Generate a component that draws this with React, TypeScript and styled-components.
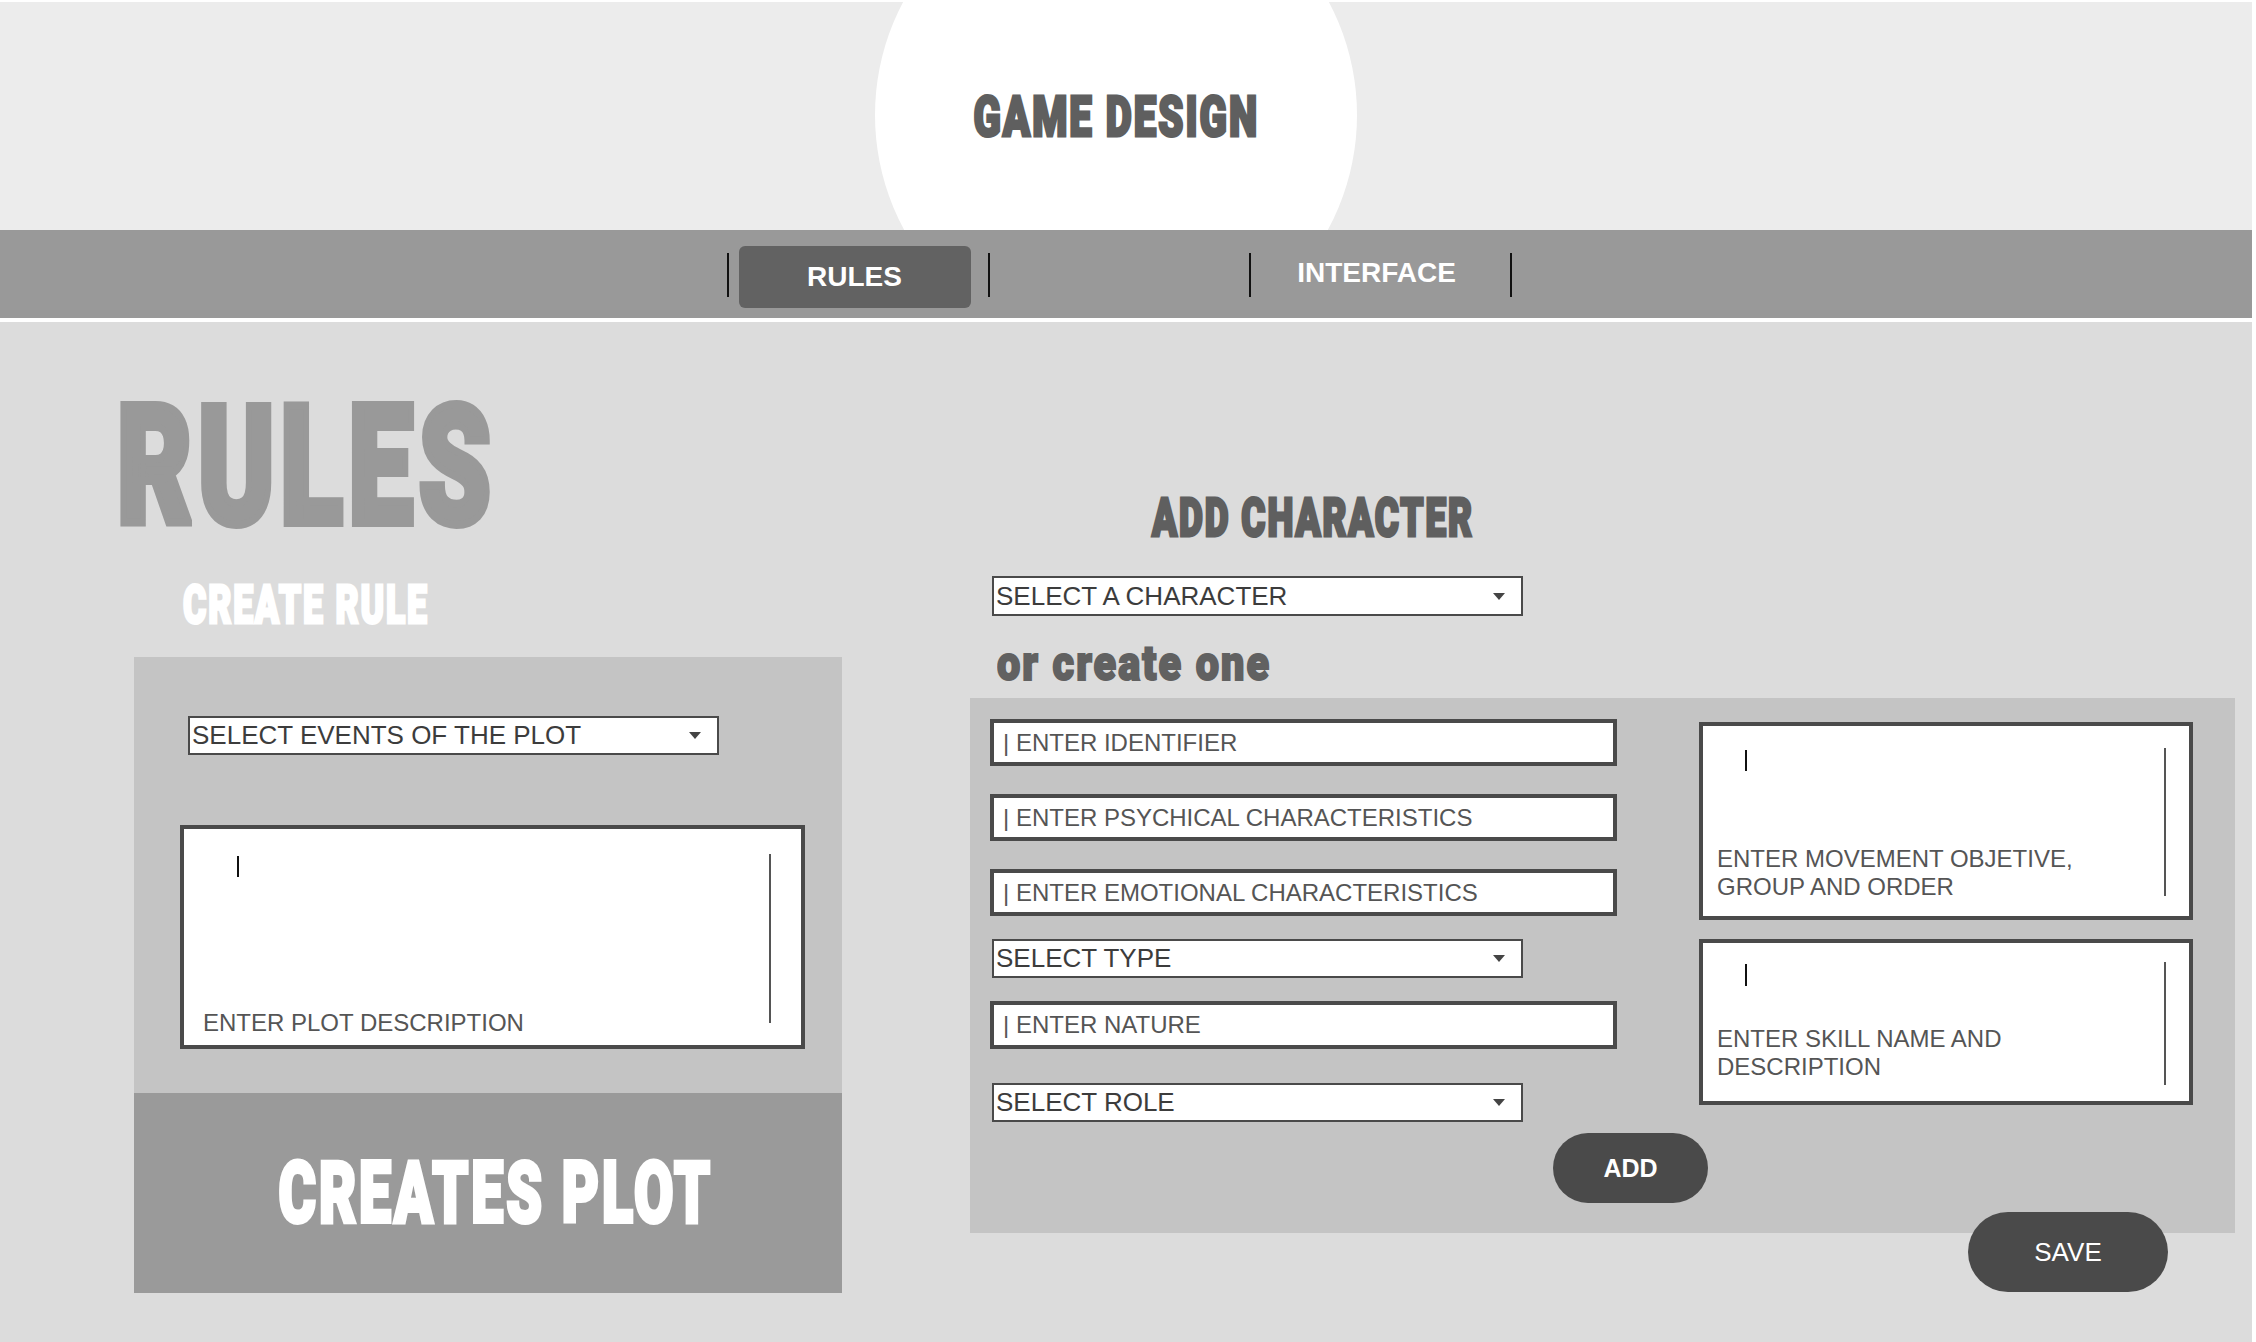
import React, { useLayoutEffect, useRef, useState } from 'react';
import styled, { createGlobalStyle } from 'styled-components';

const GlobalStyle = createGlobalStyle`
  html, body {
    margin: 0;
    padding: 0;
    background: #ffffff;
  }
  body {
    font-family: 'Liberation Sans', Arial, sans-serif;
  }
  * {
    box-sizing: border-box;
  }
`;

const Page = styled.div`
  width: 2252px;
  min-height: 1340px;
  margin-top: 2px;
  background: #dcdcdc;
  display: flex;
  flex-direction: column;
`;

const Header = styled.header`
  height: 228px;
  background: #ececec;
  display: flex;
  justify-content: center;
  padding-right: 20px;
  overflow: hidden;
`;

const Circle = styled.div`
  flex-shrink: 0;
  width: 482px;
  height: 482px;
  margin-top: -128px;
  border-radius: 50%;
  background: #ffffff;
  display: flex;
  align-items: center;
  justify-content: center;
  padding-top: 4px;
`;

const Nav = styled.nav`
  height: 92px;
  background: #999999;
  border-bottom: 4px solid #ffffff;
  display: flex;
  align-items: center;
  padding-left: 727px;
`;

const Divider = styled.span`
  width: 2px;
  height: 44px;
  background: #111111;
  margin-top: 1px;
`;

const TabSlot = styled.div`
  width: 259px;
  height: 100%;
  display: flex;
  align-items: center;
  justify-content: center;
`;

const Tab = styled.div<{ $active?: boolean }>`
  display: flex;
  align-items: center;
  justify-content: center;
  width: 232px;
  height: 62px;
  border-radius: 6px;
  background: ${(p) => (p.$active ? '#626262' : 'transparent')};
  margin: ${(p) => (p.$active ? '6px 8px 0 0' : '0 8px 2px 0')};
  color: #ffffff;
  font-size: 28px;
  font-weight: 700;
`;

const Main = styled.main`
  flex: 1;
  display: flex;
  align-items: flex-start;
`;

const LeftColumn = styled.section`
  width: 725px;
  margin-left: 117px;
  display: flex;
  flex-direction: column;
  align-items: flex-start;
`;

const RightColumn = styled.section`
  width: 1265px;
  margin-left: 128px;
  display: flex;
  flex-direction: column;
  align-items: flex-start;
`;

const Display = styled.span<{ $size: number; $color: string; $origin?: string }>`
  display: inline-block;
  font-family: Roboto, 'DejaVu Sans', sans-serif;
  font-weight: 900;
  font-size: ${(p) => p.$size}px;
  line-height: 1;
  letter-spacing: 0.05em;
  color: ${(p) => p.$color};
  -webkit-text-stroke: ${(p) => Math.round(p.$size * 0.05)}px ${(p) => p.$color};
  white-space: nowrap;
  transform-origin: ${(p) => p.$origin ?? 'left center'};
`;

const Block = styled.div<{ $top: number; $left?: number }>`
  margin-top: ${(p) => p.$top}px;
  margin-left: ${(p) => p.$left ?? 0}px;
  display: flex;
`;

type FitProps = {
  width: number;
  size: number;
  color: string;
  origin?: string;
  children: React.ReactNode;
};

// squeezes a heavy face horizontally to the condensed poster look
const FitText = ({ width, size, color, origin, children }: FitProps) => {
  const ref = useRef<HTMLSpanElement>(null);
  const [scale, setScale] = useState(1);

  useLayoutEffect(() => {
    const measure = () => {
      if (ref.current && ref.current.offsetWidth > 0) {
        setScale(width / ref.current.offsetWidth);
      }
    };
    measure();
    if (document.fonts) document.fonts.ready.then(measure);
  }, [width]);

  return (
    <Display
      ref={ref}
      $size={size}
      $color={color}
      $origin={origin}
      style={{ transform: `scaleX(${scale})` }}
    >
      {children}
    </Display>
  );
};

const Panel = styled.div<{ $width: number }>`
  width: ${(p) => p.$width}px;
  display: flex;
  flex-direction: column;
`;

const PanelBody = styled.div`
  height: 436px;
  background: #c4c4c4;
  padding: 59px 0 0 46px;
  display: flex;
  flex-direction: column;
  align-items: flex-start;
`;

const PanelFooter = styled.div`
  height: 200px;
  background: #9a9a9a;
  display: flex;
  align-items: center;
  justify-content: center;
  padding-left: 16px;
`;

const Select = styled.div<{ $top?: number; $left?: number; $h?: number }>`
  width: 531px;
  height: ${(p) => p.$h ?? 39}px;
  margin-top: ${(p) => p.$top ?? 0}px;
  margin-left: ${(p) => p.$left ?? 0}px;
  border: 2px solid #4a4a4a;
  background: #ffffff;
  display: flex;
  align-items: center;
  justify-content: space-between;
  padding: 0 16px 0 2px;
  font-size: 26px;
  color: #3c3c3c;
  white-space: nowrap;
`;

const Caret = styled.span`
  width: 0;
  height: 0;
  border-left: 6px solid transparent;
  border-right: 6px solid transparent;
  border-top: 7px solid #444444;
`;

const TextInput = styled.div<{ $top?: number; $h?: number }>`
  width: 627px;
  height: ${(p) => p.$h ?? 47}px;
  margin-top: ${(p) => p.$top ?? 0}px;
  border: 4px solid #4a4a4a;
  background: #ffffff;
  display: flex;
  align-items: center;
  padding-left: 9px;
  font-size: 24px;
  color: #555555;
  white-space: nowrap;
`;

const NoteBox = styled.div<{ $w: number; $h: number; $top?: number; $left: number; $right: number }>`
  width: ${(p) => p.$w}px;
  height: ${(p) => p.$h}px;
  margin-top: ${(p) => p.$top ?? 0}px;
  border: 4px solid #4a4a4a;
  background: #ffffff;
  display: flex;
  padding: 0 ${(p) => p.$right}px 0 ${(p) => p.$left}px;
`;

const NoteBody = styled.div<{ $top: number; $bottom: number }>`
  flex: 1;
  display: flex;
  flex-direction: column;
  justify-content: space-between;
  align-items: flex-start;
  padding: ${(p) => p.$top}px 0 ${(p) => p.$bottom}px;
`;

const TextCursor = styled.span<{ $left: number; $h: number }>`
  width: 2px;
  height: ${(p) => p.$h}px;
  margin-left: ${(p) => p.$left}px;
  background: #111111;
`;

const NoteHint = styled.span`
  font-size: 24px;
  line-height: 28px;
  color: #555555;
`;

const ScrollTrack = styled.span<{ $top: number; $bottom: number }>`
  width: 2px;
  margin: ${(p) => p.$top}px 0 ${(p) => p.$bottom}px;
  background: #555555;
`;

const CharacterPanel = styled.div`
  width: 1265px;
  height: 535px;
  margin-top: 10px;
  background: #c4c4c4;
  display: flex;
  padding-left: 20px;
`;

const FormColumn = styled.div`
  width: 627px;
  padding-top: 21px;
  display: flex;
  flex-direction: column;
  align-items: flex-start;
`;

const NotesColumn = styled.div`
  width: 494px;
  margin-left: 82px;
  padding-top: 24px;
  display: flex;
  flex-direction: column;
`;

const PillButton = styled.button<{ $w: number; $h: number; $bold?: boolean }>`
  width: ${(p) => p.$w}px;
  height: ${(p) => p.$h}px;
  border: none;
  border-radius: ${(p) => p.$h / 2}px;
  background: #4a4a4a;
  color: #ffffff;
  font-family: 'Liberation Sans', Arial, sans-serif;
  font-size: ${(p) => (p.$bold ? 25 : 26)}px;
  font-weight: ${(p) => (p.$bold ? 700 : 400)};
  display: flex;
  align-items: center;
  justify-content: center;
  padding: 0;
`;

const AddButton = styled(PillButton)`
  margin-top: 11px;
  margin-left: 563px;
`;

const SaveButton = styled(PillButton)`
  align-self: flex-end;
  margin-top: -21px;
  margin-right: 67px;
`;

const characterFields = [
  'ENTER IDENTIFIER',
  'ENTER PSYCHICAL CHARACTERISTICS',
  'ENTER EMOTIONAL CHARACTERISTICS',
];

const App = () => (
  <>
    <GlobalStyle />
    <Page>
      <Header>
        <Circle>
          <FitText width={286} size={56} color="#5f5f5f" origin="center">
            GAME DESIGN
          </FitText>
        </Circle>
      </Header>

      <Nav>
        <Divider />
        <TabSlot>
          <Tab $active>RULES</Tab>
        </TabSlot>
        <Divider />
        <TabSlot />
        <Divider />
        <TabSlot>
          <Tab>INTERFACE</Tab>
        </TabSlot>
        <Divider />
      </Nav>

      <Main>
        <LeftColumn>
          <Block $top={62}>
            <FitText width={380} size={165} color="#999999">
              RULES
            </FitText>
          </Block>
          <Block $top={29} $left={66}>
            <FitText width={246} size={54} color="#ffffff">
              CREATE RULE
            </FitText>
          </Block>

          <Block $top={25} $left={17}>
            <Panel $width={708}>
              <PanelBody>
                <Select $left={8}>
                  SELECT EVENTS OF THE PLOT
                  <Caret />
                </Select>
                <NoteBox $w={625} $h={224} $top={70} $left={19} $right={30}>
                  <NoteBody $top={27} $bottom={8}>
                    <TextCursor $left={34} $h={21} />
                    <NoteHint>ENTER PLOT DESCRIPTION</NoteHint>
                  </NoteBody>
                  <ScrollTrack $top={25} $bottom={22} />
                </NoteBox>
              </PanelBody>
              <PanelFooter>
                <FitText width={434} size={86} color="#ffffff" origin="center">
                  CREATES PLOT
                </FitText>
              </PanelFooter>
            </Panel>
          </Block>
        </LeftColumn>

        <RightColumn>
          <Block $top={170} $left={182}>
            <FitText width={322} size={53} color="#5f5f5f">
              ADD CHARACTER
            </FitText>
          </Block>
          <Select $top={31} $left={22} $h={40}>
            SELECT A CHARACTER
            <Caret />
          </Select>
          <Block $top={23} $left={27}>
            <FitText width={274} size={49} color="#616161">
              or create one
            </FitText>
          </Block>

          <CharacterPanel>
            <FormColumn>
              {characterFields.map((label, i) => (
                <TextInput key={label} $top={i === 0 ? 0 : 28}>
                  | {label}
                </TextInput>
              ))}
              <Select $top={23} $left={2}>
                SELECT TYPE
                <Caret />
              </Select>
              <TextInput $top={23} $h={48}>
                | ENTER NATURE
              </TextInput>
              <Select $top={34} $left={2}>
                SELECT ROLE
                <Caret />
              </Select>
              <AddButton $w={155} $h={70} $bold>
                ADD
              </AddButton>
            </FormColumn>

            <NotesColumn>
              <NoteBox $w={494} $h={198} $left={14} $right={23}>
                <NoteBody $top={24} $bottom={15}>
                  <TextCursor $left={28} $h={21} />
                  <NoteHint>
                    ENTER MOVEMENT OBJETIVE,
                    <br />
                    GROUP AND ORDER
                  </NoteHint>
                </NoteBody>
                <ScrollTrack $top={22} $bottom={20} />
              </NoteBox>
              <NoteBox $w={494} $h={166} $top={19} $left={14} $right={23}>
                <NoteBody $top={21} $bottom={20}>
                  <TextCursor $left={28} $h={22} />
                  <NoteHint>
                    ENTER SKILL NAME AND
                    <br />
                    DESCRIPTION
                  </NoteHint>
                </NoteBody>
                <ScrollTrack $top={19} $bottom={16} />
              </NoteBox>
            </NotesColumn>
          </CharacterPanel>

          <SaveButton $w={200} $h={80}>
            SAVE
          </SaveButton>
        </RightColumn>
      </Main>
    </Page>
  </>
);

export default App;
